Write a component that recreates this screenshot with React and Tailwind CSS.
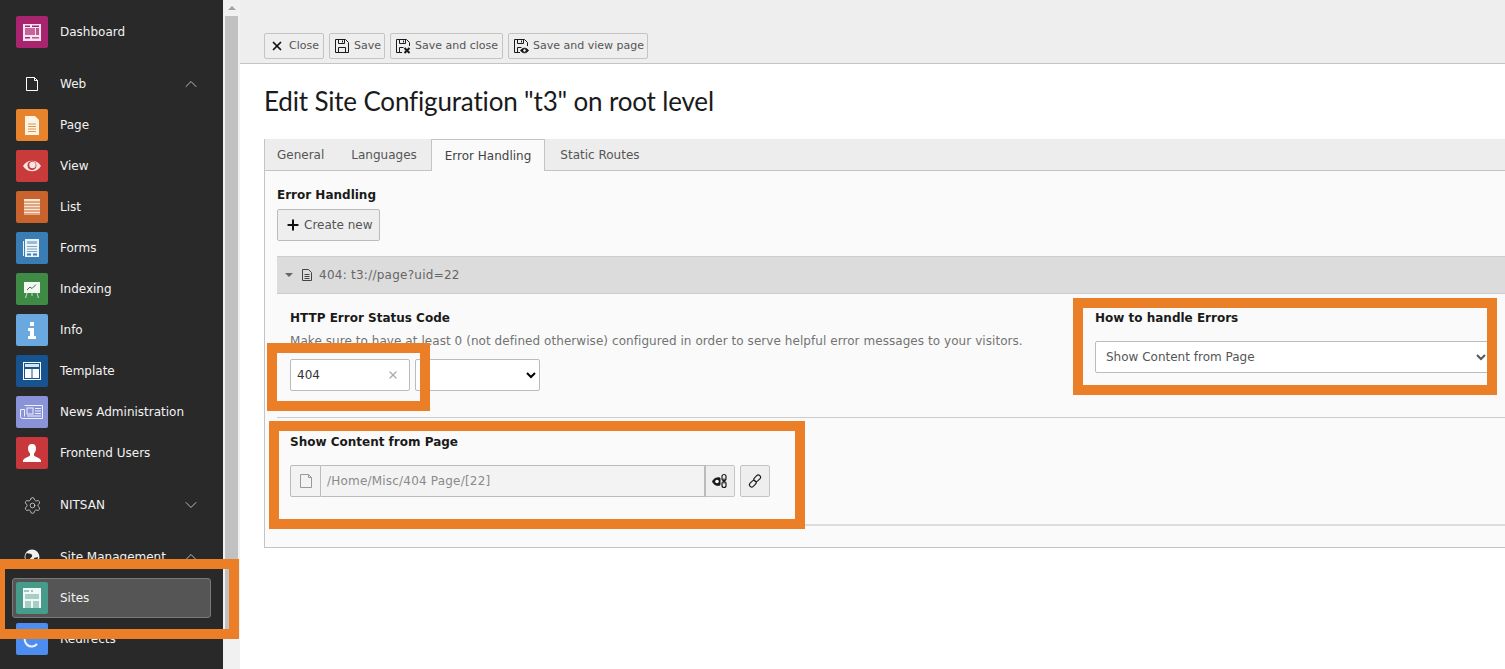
import { ChevronDown, ChevronUp, Settings, X, Plus } from "lucide-react";

const DashboardIcon = () => (
  <svg viewBox="0 0 32 32" className="w-8 h-8 rounded-[2px] bg-[#a8246f]">
    <rect x="7" y="8" width="18" height="17" fill="#fbe3f0" />
    <rect x="9" y="9.500" width="5" height="1.500" fill="#a8246f" />
    <rect x="16" y="9.500" width="7" height="1.500" fill="#a8246f" />
    <rect x="9" y="12" width="10" height="7" fill="#c4679b" />
    <rect x="20" y="12" width="3" height="7" fill="#b9588f" />
    <rect x="9" y="21" width="5" height="1.500" fill="#a8246f" />
    <rect x="16" y="21" width="7" height="1.500" fill="#b9588f" />
  </svg>
);

const PageIcon = () => (
  <svg viewBox="0 0 32 32" className="w-8 h-8 rounded-[2px] bg-[#e8832d]">
    <path d="M9 7h10l4 4v15H9z" fill="#fff3e3" />
    <path d="M12 15h8M12 17.500h8M12 20h8M12 22.500h8" stroke="#d99a55" strokeWidth="1" />
  </svg>
);

const ViewIcon = () => (
  <svg viewBox="0 0 32 32" className="w-8 h-8 rounded-[2px] bg-[#c93a3a]">
    <path d="M7 16c4-7 14-7 18 0-4 7-14 7-18 0z" fill="#f9e4e4" />
    <circle cx="16" cy="15.500" r="4.500" fill="#c93a3a" />
    <circle cx="16.500" cy="15" r="3.200" fill="#f9e4e4" />
  </svg>
);

const ListIcon = () => (
  <svg viewBox="0 0 32 32" className="w-8 h-8 rounded-[2px] bg-[#c8632e]">
    <rect x="8" y="8" width="16" height="16" fill="#fbe6d3" />
    <path d="M8 11h16M8 14h16M8 17h16M8 20h16M8 23h16" stroke="#c8632e" strokeWidth="1" />
  </svg>
);

const FormsIcon = () => (
  <svg viewBox="0 0 32 32" className="w-8 h-8 rounded-[2px] bg-[#3a7db4]">
    <path d="M7.500 9v15" stroke="#eaf3fa" strokeWidth="1" />
    <rect x="9" y="7" width="14" height="18" fill="#eaf3fa" />
    <rect x="11" y="9" width="10" height="3" fill="#9dbbd3" />
    <path d="M11 14.500h10M11 17h10M11 19.500h10" stroke="#7fa5c4" strokeWidth="1" />
    <rect x="11" y="21.500" width="4" height="2" fill="#3a7db4" />
    <rect x="17" y="21.500" width="4" height="2" fill="#3a7db4" />
  </svg>
);

const IndexingIcon = () => (
  <svg viewBox="0 0 32 32" className="w-8 h-8 rounded-[2px] bg-[#3f8a45]">
    <rect x="8" y="9" width="16" height="11" fill="#f3f8f3" />
    <path d="M11 17l3-3 2 1.500 4-4" stroke="#3f6a45" strokeWidth="1" fill="none" />
    <path d="M11 20l-1.500 5M21 20l1.500 5M16 20v3" stroke="#c7dfc8" strokeWidth="1" />
  </svg>
);

const InfoIcon = () => (
  <svg viewBox="0 0 32 32" className="w-8 h-8 rounded-[2px] bg-[#6aa9e0]">
    <rect x="14" y="8" width="4" height="4" fill="#fff" />
    <path d="M12 14h6v8h2v3h-8v-3h2v-5h-2z" fill="#fff" />
  </svg>
);

const TemplateIcon = () => (
  <svg viewBox="0 0 32 32" className="w-8 h-8 rounded-[2px] bg-[#17548f]">
    <rect x="7.500" y="7.500" width="17" height="17" fill="none" stroke="#fff" strokeWidth="1" />
    <rect x="9" y="9" width="14" height="3" fill="#d6e4f0" />
    <rect x="9" y="14" width="6.500" height="9" fill="#fff" />
    <rect x="16.500" y="14" width="6.500" height="9" fill="#fff" />
  </svg>
);

const NewsIcon = () => (
  <svg viewBox="0 0 32 32" className="w-8 h-8 rounded-[2px] bg-[#8a93d8]">
    <path d="M8.500 9.500h18v13h-20a2 2 0 0 1-2-2v-7h4v7" fill="none" stroke="#eef0fb" strokeWidth="1" />
    <rect x="11" y="12" width="6" height="6" fill="none" stroke="#eef0fb" strokeWidth="1" />
    <path d="M19 12.500h6M19 15h6M19 17.500h6M11 20h14" stroke="#eef0fb" strokeWidth="1" />
  </svg>
);

const UsersIcon = () => (
  <svg viewBox="0 0 32 32" className="w-8 h-8 rounded-[2px] bg-[#c8373b]">
    <path d="M16 7c-3 0-4 2-4 4.500 0 2 1 4 2 5v2c-1 1.500-6 2-7 5v1.500h18V23.500c-1-3-6-3.500-7-5v-2c1-1 2-3 2-5C20 9 19 7 16 7z" fill="#fff" />
  </svg>
);

const SitesIcon = () => (
  <svg viewBox="0 0 32 32" className="w-8 h-8 rounded-[2px] bg-[#479b8a]">
    <rect x="7" y="6" width="18" height="20" fill="#f2f8f7" />
    <path d="M8 9h5M15 9h2" stroke="#479b8a" strokeWidth="1" />
    <rect x="9" y="12" width="14" height="5" fill="#a5cfc6" />
    <rect x="9" y="19" width="6" height="7" fill="#a5cfc6" />
    <rect x="17" y="19" width="6" height="7" fill="#a5cfc6" />
  </svg>
);

const RedirectsIcon = () => (
  <svg viewBox="0 0 32 32" className="w-8 h-8 rounded-[2px] bg-[#4d8df0]">
    <path d="M20 11a7 7 0 1 0 1 10" fill="none" stroke="#e6f0fe" strokeWidth="2" />
  </svg>
);

const DocIcon = ({ className = "w-4 h-4", stroke = "#fff" }) => (
  <svg viewBox="0 0 16 16" className={className} fill="none" stroke={stroke}>
    <path d="M2.500 1.500h8l3 3v10h-11z" />
    <path d="M10.500 1.500v3h3" />
  </svg>
);

const RecordIcon = () => (
  <svg viewBox="0 0 14 14" className="w-[14px] h-[14px] ml-[7px]" fill="none" stroke="#444444">
    <path d="M2.500 1.500h6l3 3v8h-9z" />
    <path d="M4.500 6.500h5M4.500 8.500h5M4.500 10.500h5" />
  </svg>
);

const GlobeIcon = () => (
  <svg viewBox="0 0 16 16" className="w-4 h-4">
    <circle cx="8" cy="8" r="7.500" fill="#f0f0f0" />
    <path d="M3 4c2 1 4 0 5 2s-2 3-3 5-1 3-2 2-3-7 0-9zM10 9l4-1c0 3-2 5-4 6z" fill="#292929" />
  </svg>
);

const Floppy = ({ extra }) => (
  <svg viewBox="0 0 16 16" className="w-4 h-4" fill="none" stroke="#1a1a1a">
    <path d={extra ? "M7 14.500H1.500v-13h10l3 3V8" : "M1.500 1.500h10l3 3v10h-13z"} />
    <path d="M4.500 1.500v4h6v-4M8.500 2.500v2" />
    <path d={extra ? "M4.500 14.500v-5h4" : "M4.500 14.500v-5h7v5"} />
    {extra === "close" && <path d="M9.500 10l5 5M14.500 10l-5 5" strokeWidth="2" />}
    {extra === "view" && (
      <>
        <path d="M7.500 12.500c2-3 6-3 8 0-2 3-6 3-8 0z" fill="#1a1a1a" />
        <circle cx="11.500" cy="12.500" r="1.200" fill="#fff" stroke="none" />
      </>
    )}
  </svg>
);

const ViewLinkIcon = () => (
  <svg viewBox="0 0 16 16" className="w-4 h-4" fill="none" stroke="#1a1a1a">
    <path d="M0.500 8.500C2 5 5.500 4.500 8 5v7C5 13 2 12 0.500 8.500z" fill="#1a1a1a" />
    <circle cx="5" cy="8.500" r="1.800" fill="#fff" stroke="none" />
    <rect x="10" y="1.500" width="4" height="6" rx="2" strokeWidth="1.200" />
    <rect x="10" y="8.500" width="4" height="6" rx="2" strokeWidth="1.200" />
    <path d="M12 5.500v5" strokeWidth="1.200" />
  </svg>
);

const LinkIcon = () => (
  <svg viewBox="0 0 16 16" className="w-4 h-4" fill="none" stroke="#1a1a1a" strokeWidth="1.100">
    <rect x="8" y="1.500" width="4.500" height="7.500" rx="2.200" transform="rotate(45 10.200 5.200)" />
    <rect x="3.500" y="7" width="4.500" height="7.500" rx="2.200" transform="rotate(45 5.800 10.800)" />
  </svg>
);

const webModules = [
  { label: "Page", icon: PageIcon },
  { label: "View", icon: ViewIcon },
  { label: "List", icon: ListIcon },
  { label: "Forms", icon: FormsIcon },
  { label: "Indexing", icon: IndexingIcon },
  { label: "Info", icon: InfoIcon },
  { label: "Template", icon: TemplateIcon },
  { label: "News Administration", icon: NewsIcon },
  { label: "Frontend Users", icon: UsersIcon },
];

const ModuleRow = ({ icon: Icon, label }) => (
  <div className="flex items-center gap-3 h-8 ml-4">
    <Icon />
    <span>{label}</span>
  </div>
);

const GroupRow = ({ icon, label, open }) => (
  <div className="flex items-center h-8 ml-4">
    <span className="w-8 flex justify-center">{icon}</span>
    <span className="ml-3 flex-1">{label}</span>
    {open ? (
      <ChevronUp className="w-5 h-5 mr-[22px] text-[#bbbbbb]" strokeWidth={1.2} />
    ) : (
      <ChevronDown className="w-5 h-5 mr-[22px] text-[#bbbbbb]" strokeWidth={1.2} />
    )}
  </div>
);

const Sidebar = () => (
  <div className="w-[223px] shrink-0 h-full bg-[#292929] text-[#f2f2f2] text-[12px] overflow-hidden pt-4">
    <ModuleRow icon={DashboardIcon} label="Dashboard" />
    <div className="mt-5">
      <GroupRow icon={<DocIcon />} label="Web" open />
    </div>
    <div className="mt-[9px] flex flex-col gap-[9px]">
      {webModules.map((item) => (
        <ModuleRow key={item.label} icon={item.icon} label={item.label} />
      ))}
    </div>
    <div className="mt-5">
      <GroupRow icon={<Settings className="w-[19px] h-[19px] text-[#dddddd]" strokeWidth={1} />} label="NITSAN" />
    </div>
    <div className="mt-5">
      <GroupRow icon={<GlobeIcon />} label="Site Management" open />
    </div>
    <div className="mt-[5px] mr-3 ml-3 h-10 pl-[3px] flex items-center gap-3 border border-[#7a7a7a] bg-[#555555] rounded-[3px]">
      <SitesIcon />
      <span>Sites</span>
    </div>
    <div className="mt-[5px]">
      <ModuleRow icon={RedirectsIcon} label="Redirects" />
    </div>
  </div>
);

const Scrollbar = () => (
  <div className="w-[17px] shrink-0 h-full bg-[#f1f1f1] flex flex-col items-center">
    <div className="h-4 flex items-center">
      <div className="w-0 h-0 border-x-[4px] border-x-transparent border-b-[4px] border-b-[#a3a3a3]" />
    </div>
    <div className="w-[13px] h-[614px] bg-[#c1c1c1]" />
  </div>
);

const ToolbarButton = ({ icon, label, padRight = "pr-[4px]" }) => (
  <button className={`h-[26px] pl-[4px] ${padRight} flex items-center gap-[4px] bg-[#eeeeee] border border-[#c4c4c4] rounded-[2px] text-[#555555] text-[11px]`}>
    {icon}
    <span>{label}</span>
  </button>
);

const Tabs = () => (
  <div className="flex h-8 bg-[#ededed] border-b border-[#c4c4c4] text-[12px] text-[#555555]">
    <div className="h-full pl-3 pr-[13px] flex items-center">General</div>
    <div className="h-full pl-[14px] pr-[14px] flex items-center">Languages</div>
    <div className="h-8 px-[13px] flex items-center bg-[#fafafa] border border-b-0 border-[#c4c4c4] text-[#444444]">
      Error Handling
    </div>
    <div className="h-full pl-[15px] flex items-center">Static Routes</div>
  </div>
);

const Content = () => (
  <div className="flex-1 min-w-0 h-full bg-white overflow-hidden">
    <div className="h-16 bg-[#eeeeee] border-b border-[#c4c4c4] pt-[33px] pl-6 flex gap-[5px] items-start">
      <ToolbarButton
        icon={
          <span className="w-4 flex justify-center">
            <X className="w-[14px] h-[14px] text-[#111111]" strokeWidth={3} />
          </span>
        }
        label="Close"
      />
      <ToolbarButton icon={<Floppy />} label="Save" padRight="pr-[3px]" />
      <ToolbarButton icon={<Floppy extra="close" />} label="Save and close" />
      <ToolbarButton icon={<Floppy extra="view" />} label="Save and view page" padRight="pr-[3px]" />
    </div>

    <div className="pl-6">
      <h1 className="h-[75px] flex items-center font-['Lato',sans-serif] text-[26px] tracking-[-0.17px] text-[#1a1a1a]">
        Edit Site Configuration "t3" on root level
      </h1>

      <div className="border-b border-[#c4c4c4] bg-[#fafafa] h-[409px] border-l">
        <Tabs />

        <div className="pl-3 pt-4 text-[12px]">
          <div className="font-bold text-[#1a1a1a] leading-4">Error Handling</div>
          <button className="mt-[6px] h-8 w-[103px] pl-[7px] flex items-center gap-[3px] bg-[#eeeeee] border border-[#bbbbbb] rounded-[2px] text-[#555555]">
            <Plus className="w-4 h-4 text-[#111111]" strokeWidth={3} />
            Create new
          </button>

          <div className="mt-[15px] border-b-2 border-[#dddddd] h-[270px]">
            <div className="h-[38px] flex items-center pl-2 bg-[#dcdcdc] border-y border-[#cccccc] text-[#666666]">
              <div className="w-0 h-0 border-x-[4px] border-x-transparent border-t-[4px] border-t-[#666666]" />
              <RecordIcon />
              <span className="ml-[5px] tracking-[0.25px]">404: t3://page?uid=22</span>
            </div>

            <div className="h-[124px] border-b border-[#cccccc] pl-[13px] pr-[15px] pt-4 flex justify-between">
              <div>
                <div className="font-bold text-[#1a1a1a] leading-4">HTTP Error Status Code</div>
                <p className="mt-[7px] leading-4 text-[#737373] tracking-[0.06px]">
                  Make sure to have at least 0 (not defined otherwise) configured in order to serve helpful error messages to your visitors.
                </p>
                <div className="mt-[10px] flex gap-[5px]">
                  <div className="w-[120px] h-8 pl-[6px] pr-[10px] flex items-center justify-between bg-white border border-[#bbbbbb] rounded-[2px] text-[#333333]">
                    <span>404</span>
                    <X className="w-3 h-3 text-[#aaaaaa]" strokeWidth={2.500} />
                  </div>
                  <select className="w-[125px] h-8 bg-white border border-[#bbbbbb] rounded-[2px]" />
                </div>
              </div>
              <div className="w-[395px]">
                <div className="font-bold text-[#1a1a1a] leading-4">How to handle Errors</div>
                <select className="mt-[15px] w-full h-8 pl-[6px] bg-white border border-[#bbbbbb] rounded-[2px] text-[#555555]">
                  <option>Show Content from Page</option>
                </select>
              </div>
            </div>

            <div className="pl-[13px] pt-4">
              <div className="font-bold text-[#1a1a1a] leading-4">Show Content from Page</div>
              <div className="mt-[15px] flex h-8">
                <div className="w-[31px] flex items-center justify-center bg-[#f3f3f3] border border-[#bbbbbb] rounded-l-[2px]">
                  <DocIcon className="w-4 h-4" stroke="#999999" />
                </div>
                <div className="w-[385px] flex items-center pl-[6px] bg-[#f3f3f3] border-y border-r-2 border-[#bbbbbb] text-[#8a8a8a] tracking-[0.2px]">
                  /Home/Misc/404 Page/[22]
                </div>
                <button className="w-[29px] flex items-center justify-center bg-[#eeeeee] border-y border-r border-[#c4c4c4] rounded-r-[2px]">
                  <ViewLinkIcon />
                </button>
                <button className="ml-[5px] w-[30px] flex items-center justify-center bg-[#eeeeee] border border-[#c4c4c4] rounded-[2px]">
                  <LinkIcon />
                </button>
              </div>
            </div>
          </div>
        </div>
      </div>
    </div>
  </div>
);

export default function App() {
  return (
    <div className="relative flex w-[1505px] h-[669px] overflow-hidden font-['DejaVu_Sans',sans-serif]">
      <Sidebar />
      <Scrollbar />
      <Content />

      {/* orange tutorial highlights drawn on top of the screenshot */}
      <div className="absolute left-[-5px] top-[559px] w-[244px] h-[80px] border-[10px] border-[#ea7f27]" />
      <div className="absolute left-[267px] top-[343px] w-[163px] h-[68px] border-[10px] border-[#ea7f27]" />
      <div className="absolute left-[269px] top-[421px] w-[536px] h-[108px] border-[10px] border-[#ea7f27]" />
      <div className="absolute left-[1073px] top-[298px] w-[424px] h-[97px] border-[10px] border-[#ea7f27]" />
    </div>
  );
}
